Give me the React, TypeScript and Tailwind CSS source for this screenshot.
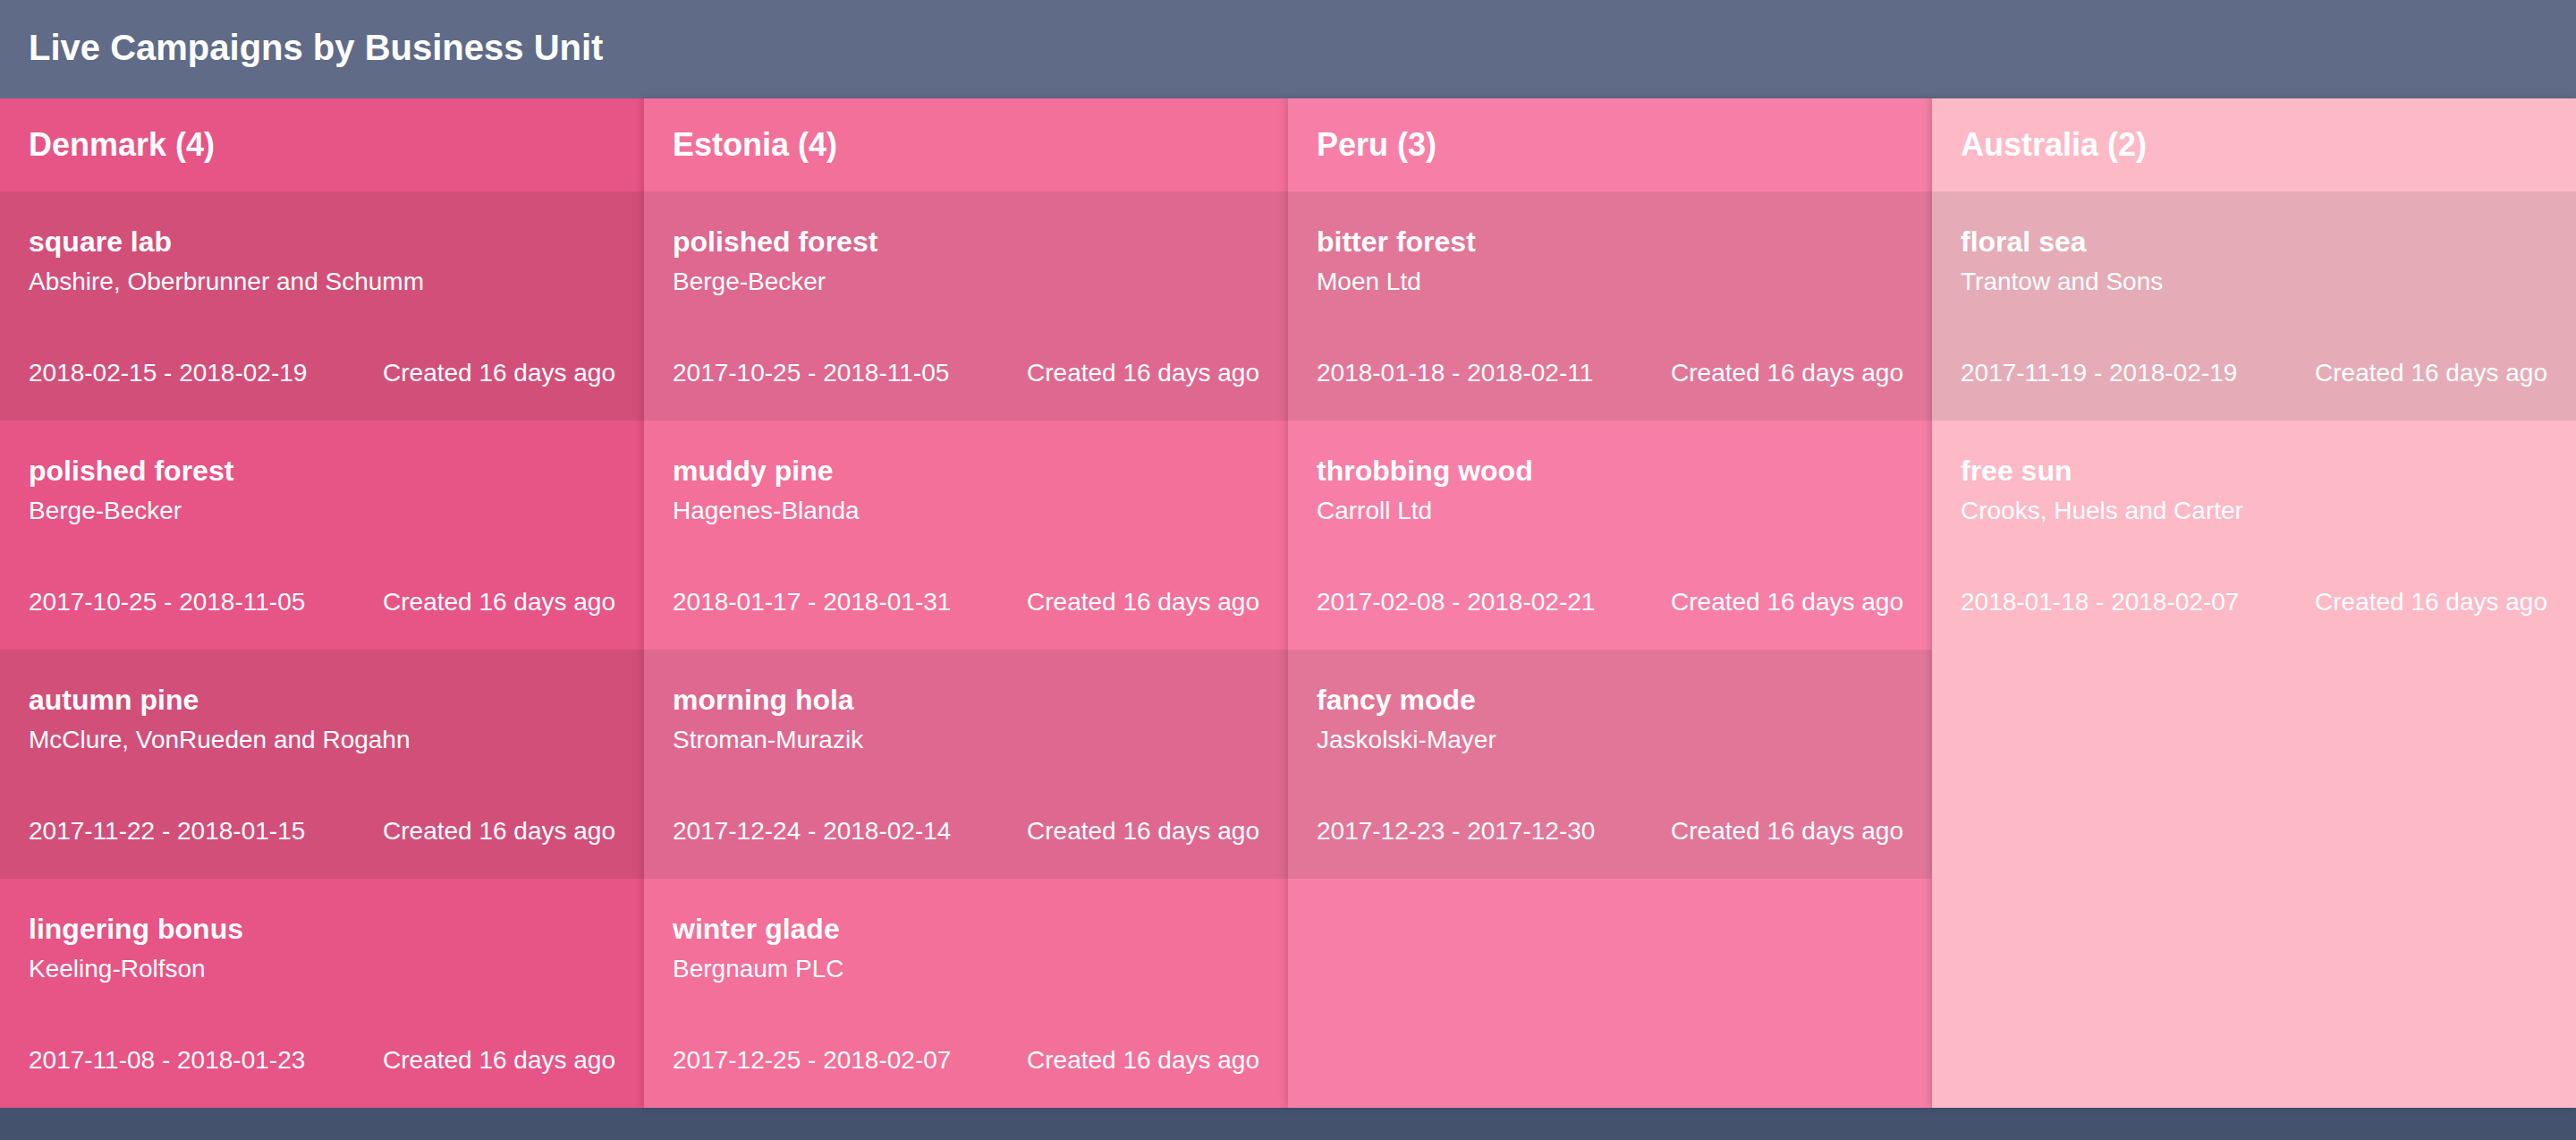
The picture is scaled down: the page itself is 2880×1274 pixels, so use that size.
type Campaign = {
  name: string;
  company: string;
  start: string;
  end: string;
};

type Unit = {
  name: string;
  bg: string;
  dark: string;
  shadow: string;
  campaigns: Campaign[];
};

const UNITS: Unit[] = [
  {
    name: "Denmark",
    bg: "bg-[#e75486]",
    dark: "bg-[#d24f7a]",
    shadow: "",
    campaigns: [
      { name: "square lab", company: "Abshire, Oberbrunner and Schumm", start: "2018-02-15", end: "2018-02-19" },
      { name: "polished forest", company: "Berge-Becker", start: "2017-10-25", end: "2018-11-05" },
      { name: "autumn pine", company: "McClure, VonRueden and Rogahn", start: "2017-11-22", end: "2018-01-15" },
      { name: "lingering bonus", company: "Keeling-Rolfson", start: "2017-11-08", end: "2018-01-23" },
    ],
  },
  {
    name: "Estonia",
    bg: "bg-[#f3709a]",
    dark: "bg-[#de688f]",
    shadow: "shadow-[-3px_0_8px_rgba(0,0,0,0.12)]",
    campaigns: [
      { name: "polished forest", company: "Berge-Becker", start: "2017-10-25", end: "2018-11-05" },
      { name: "muddy pine", company: "Hagenes-Blanda", start: "2018-01-17", end: "2018-01-31" },
      { name: "morning hola", company: "Stroman-Murazik", start: "2017-12-24", end: "2018-02-14" },
      { name: "winter glade", company: "Bergnaum PLC", start: "2017-12-25", end: "2018-02-07" },
    ],
  },
  {
    name: "Peru",
    bg: "bg-[#f77fa7]",
    dark: "bg-[#e27699]",
    shadow: "shadow-[-3px_0_8px_rgba(0,0,0,0.12)]",
    campaigns: [
      { name: "bitter forest", company: "Moen Ltd", start: "2018-01-18", end: "2018-02-11" },
      { name: "throbbing wood", company: "Carroll Ltd", start: "2017-02-08", end: "2018-02-21" },
      { name: "fancy mode", company: "Jaskolski-Mayer", start: "2017-12-23", end: "2017-12-30" },
    ],
  },
  {
    name: "Australia",
    bg: "bg-[#feb9c7]",
    dark: "bg-[#e5acb7]",
    shadow: "shadow-[-3px_0_8px_rgba(0,0,0,0.12)]",
    campaigns: [
      { name: "floral sea", company: "Trantow and Sons", start: "2017-11-19", end: "2018-02-19" },
      { name: "free sun", company: "Crooks, Huels and Carter", start: "2018-01-18", end: "2018-02-07" },
    ],
  },
];

function CampaignCard({ campaign, dark }: { campaign: Campaign; dark: string }) {
  return (
    <div className={`flex h-[256px] flex-col px-8 pt-8 pb-8 ${dark}`}>
      <div className="text-[32px] leading-[48px] font-bold">{campaign.name}</div>
      <div className="text-[28px] leading-[42px]">{campaign.company}</div>
      <div className="mt-auto flex items-center justify-between text-[28px] leading-[42px]">
        <span>
          {campaign.start} - {campaign.end}
        </span>
        <span>Created 16 days ago</span>
      </div>
    </div>
  );
}

export default function App() {
  return (
    <div className="flex h-[1274px] flex-col bg-[#44526e] font-['Liberation_Sans',Arial,sans-serif] text-white">
      <header className="flex h-[110px] items-center bg-[#5f6b87] px-8 pb-1">
        <h1 className="text-[40px] font-bold">Live Campaigns by Business Unit</h1>
      </header>

      <div className="grid h-[1128px] grid-cols-4">
        {UNITS.map((unit) => (
          <section key={unit.name} className={`relative flex flex-col ${unit.bg} ${unit.shadow}`}>
            <h2 className="flex h-[104px] items-center px-8 text-[36px] font-bold">
              {unit.name} ({unit.campaigns.length})
            </h2>
            {unit.campaigns.map((c, i) => (
              <CampaignCard key={c.name} campaign={c} dark={i % 2 === 0 ? unit.dark : ""} />
            ))}
          </section>
        ))}
      </div>
    </div>
  );
}
